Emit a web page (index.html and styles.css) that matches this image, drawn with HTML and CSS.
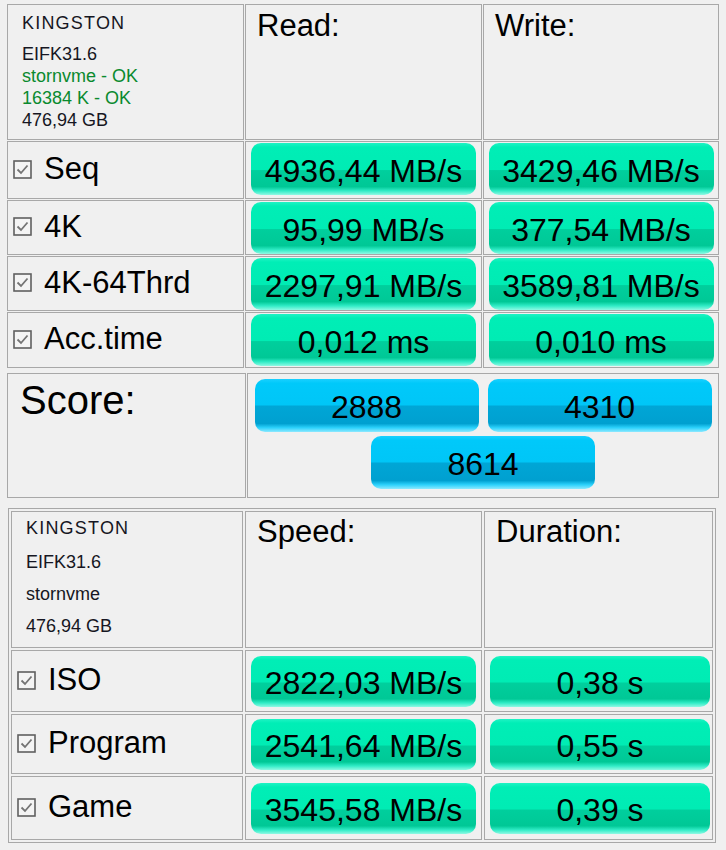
FILE: index.html
```html
<!DOCTYPE html>
<html lang="de">
<head>
    <meta charset="UTF-8">
    <meta name="viewport" content="width=device-width, initial-scale=1.0">
    <title>AS SSD Benchmark</title>
    <link rel="stylesheet" href="styles.css">
</head>
<body>

    <!-- checkbox symbol, reused in every label -->
    <svg class="defs" width="0" height="0">
        <symbol id="chk" viewBox="0 0 19 19">
            <rect x="1" y="1" width="17" height="17" fill="#f4f4f4" stroke="#606060" stroke-width="1.6"/>
            <polyline points="4.5,9.5 8,13 14.5,5.5" fill="none" stroke="#747474" stroke-width="1.8"/>
        </symbol>
    </svg>

    <!-- benchmark -->
    <div class="bench">
        <div class="cell info">
            <div class="brand">KINGSTON</div>
            <div>EIFK31.6</div>
            <div class="ok">stornvme - OK</div>
            <div class="ok">16384 K - OK</div>
            <div>476,94 GB</div>
        </div>
        <div class="cell head">Read:</div>
        <div class="cell head">Write:</div>

        <div class="cell label"><svg class="chk"><use href="#chk"/></svg>Seq</div>
        <div class="cell value"><span class="pill">4936,44 MB/s</span></div>
        <div class="cell value"><span class="pill">3429,46 MB/s</span></div>

        <div class="cell label"><svg class="chk"><use href="#chk"/></svg>4K</div>
        <div class="cell value"><span class="pill">95,99 MB/s</span></div>
        <div class="cell value"><span class="pill">377,54 MB/s</span></div>

        <div class="cell label"><svg class="chk"><use href="#chk"/></svg>4K-64Thrd</div>
        <div class="cell value"><span class="pill">2297,91 MB/s</span></div>
        <div class="cell value"><span class="pill">3589,81 MB/s</span></div>

        <div class="cell label"><svg class="chk"><use href="#chk"/></svg>Acc.time</div>
        <div class="cell value"><span class="pill">0,012 ms</span></div>
        <div class="cell value"><span class="pill">0,010 ms</span></div>
    </div>

    <!-- score -->
    <div class="score">
        <div class="cell score-title">Score:</div>
        <div class="cell score-values">
            <span class="pill blue">2888</span>
            <span class="pill blue">4310</span>
            <span class="pill blue">8614</span>
        </div>
    </div>

    <!-- copy benchmark -->
    <div class="copy">
        <div class="cell info wide">
            <div class="brand">KINGSTON</div>
            <div>EIFK31.6</div>
            <div>stornvme</div>
            <div>476,94 GB</div>
        </div>
        <div class="cell head">Speed:</div>
        <div class="cell head">Duration:</div>

        <div class="cell label"><svg class="chk"><use href="#chk"/></svg>ISO</div>
        <div class="cell value"><span class="pill">2822,03 MB/s</span></div>
        <div class="cell value"><span class="pill short">0,38 s</span></div>

        <div class="cell label"><svg class="chk"><use href="#chk"/></svg>Program</div>
        <div class="cell value"><span class="pill">2541,64 MB/s</span></div>
        <div class="cell value"><span class="pill short">0,55 s</span></div>

        <div class="cell label"><svg class="chk"><use href="#chk"/></svg>Game</div>
        <div class="cell value"><span class="pill">3545,58 MB/s</span></div>
        <div class="cell value"><span class="pill short">0,39 s</span></div>
    </div>

</body>
</html>
```

FILE: styles.css
```css
body {
    margin: 0;
    background-color: #f0f0f0;
    font-family: "Liberation Sans", Arial, sans-serif;
    color: #000;
}

.defs {
    position: absolute;
}

/* cells */
.cell {
    box-sizing: border-box;
    border: 1px solid #a8a8a8;
}

.info {
    padding: 7px 0 0 14px;
    font-size: 18px;
    line-height: 22px;
    color: #161622;
}

.info .brand {
    margin-bottom: 9px;
    letter-spacing: 1.2px;
}

.info .ok {
    color: #0a8a2e;
}

.head {
    padding: 3px 0 0 11px;
    font-size: 31px;
}

.label {
    display: flex;
    align-items: center;
    gap: 12px;
    padding: 0 0 2px 5px;
    font-size: 31px;
}

.chk {
    width: 19px;
    height: 19px;
    flex-shrink: 0;
}

.value {
    display: flex;
    justify-content: center;
    align-items: flex-start;
    padding-top: 1px;
}

/* green result box */
.pill {
    box-sizing: border-box;
    display: flex;
    justify-content: center;
    align-items: center;
    width: 225px;
    height: 52px;
    padding-top: 4px;
    border-radius: 10px;
    font-size: 32px;
    background: linear-gradient(to bottom,
        #1ff3c4 0%, #00eeb6 8%, #00ecb4 51%,
        #00cf9d 53%, #00c896 84%,
        #30ecc6 92%, #8ff9e4 100%);
}

.pill.blue {
    width: 224px;
    height: 53px;
    background: linear-gradient(to bottom,
        #1ad0ff 0%, #00c9fa 8%, #00c6f7 49%,
        #00a6d6 51%, #00a0d0 84%,
        #2cd2fc 92%, #8de9ff 100%);
}

/* top table */
.bench {
    display: grid;
    grid-template-columns: 237px 237px 236px;
    grid-template-rows: 136px 58px 55px 55px 56px;
    gap: 1px;
    width: 712px;
    margin: 4px 0 0 7px;
}

/* score */
.score {
    display: grid;
    grid-template-columns: 239px 472px;
    gap: 1px;
    width: 712px;
    height: 125px;
    margin: 5px 0 0 7px;
}

.score-title {
    padding: 4px 0 0 12px;
    font-size: 40px;
}

.score-values {
    display: flex;
    flex-wrap: wrap;
    justify-content: center;
    align-content: flex-start;
    gap: 4px 9px;
    padding-top: 5px;
}

/* copy table */
.copy {
    display: grid;
    grid-template-columns: 232px 237px 229px;
    grid-template-rows: 137px 62px 60px 64px;
    gap: 2px;
    width: 708px;
    box-sizing: border-box;
    margin: 10px 0 0 8px;
    padding: 2px;
    border: 1px solid #a8a8a8;
}

.copy .info.wide {
    padding: 0 0 0 14px;
    line-height: 32px;
}

.copy .info .brand {
    margin-bottom: 2px;
}

.copy .head {
    padding-top: 2px;
}

.copy .value {
    align-items: center;
    padding-top: 0;
}

.copy .pill {
    height: 51px;
}

.copy .pill.short {
    width: 220px;
    margin-left: 3px;
}
```
